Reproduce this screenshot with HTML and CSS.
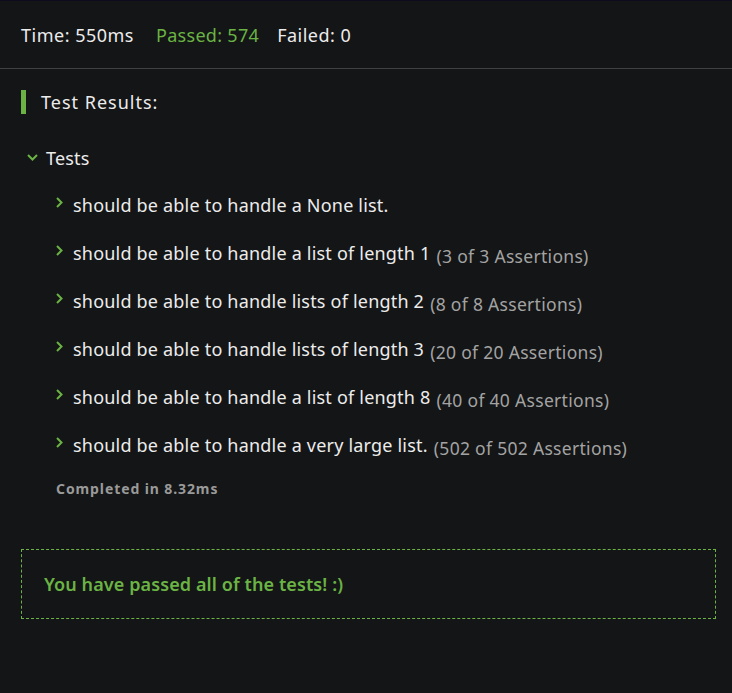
FILE: index.html
```html
<!DOCTYPE html>
<html>
<head>
<meta charset="utf-8">
<link rel="stylesheet" href="styles.css">
</head>
<body>
<div class="panel">
  <div class="stats">
    <span class="stat">Time: 550ms</span>
    <span class="stat pass">Passed: 574</span>
    <span class="stat">Failed: 0</span>
  </div>
  <div class="results">
    <h2 class="title">Test Results:</h2>
    <div class="group">
      <div class="group-head">
        <svg class="chev-down" width="11" height="7" viewBox="0 0 11 7"><path d="M1 1 L5.5 5.5 L10 1" fill="none" stroke="#6ab344" stroke-width="2"/></svg>
        <span>Tests</span>
      </div>
      <ul class="items">
        <li class="item"><svg class="chev" width="7" height="11" viewBox="0 0 7 11"><path d="M1 1 L5.5 5.5 L1 10" fill="none" stroke="#6ab344" stroke-width="2"/></svg><span class="name">should be able to handle a None list.</span></li>
        <li class="item"><svg class="chev" width="7" height="11" viewBox="0 0 7 11"><path d="M1 1 L5.5 5.5 L1 10" fill="none" stroke="#6ab344" stroke-width="2"/></svg><span class="name">should be able to handle a list of length 1</span><span class="count">(3 of 3 Assertions)</span></li>
        <li class="item"><svg class="chev" width="7" height="11" viewBox="0 0 7 11"><path d="M1 1 L5.5 5.5 L1 10" fill="none" stroke="#6ab344" stroke-width="2"/></svg><span class="name">should be able to handle lists of length 2</span><span class="count">(8 of 8 Assertions)</span></li>
        <li class="item"><svg class="chev" width="7" height="11" viewBox="0 0 7 11"><path d="M1 1 L5.5 5.5 L1 10" fill="none" stroke="#6ab344" stroke-width="2"/></svg><span class="name">should be able to handle lists of length 3</span><span class="count">(20 of 20 Assertions)</span></li>
        <li class="item"><svg class="chev" width="7" height="11" viewBox="0 0 7 11"><path d="M1 1 L5.5 5.5 L1 10" fill="none" stroke="#6ab344" stroke-width="2"/></svg><span class="name">should be able to handle a list of length 8</span><span class="count">(40 of 40 Assertions)</span></li>
        <li class="item"><svg class="chev" width="7" height="11" viewBox="0 0 7 11"><path d="M1 1 L5.5 5.5 L1 10" fill="none" stroke="#6ab344" stroke-width="2"/></svg><span class="name">should be able to handle a very large list.</span><span class="count">(502 of 502 Assertions)</span></li>
      </ul>
      <div class="completed">Completed in 8.32ms</div>
    </div>
    <div class="success">You have passed all of the tests! :)</div>
  </div>
</div>
</body>
</html>
```
FILE: styles.css
```css
html, body {
  margin: 0;
  padding: 0;
  background: #141516;
}
body {
  font-family: "Noto Sans", sans-serif;
  color: #ececec;
  min-height: 693px;
  border-top: 1px solid #0e0b1c;
  box-sizing: border-box;
}
.panel {
  display: flex;
  flex-direction: column;
}
.stats {
  display: flex;
  gap: 18px;
  height: 67px;
  align-items: center;
  padding: 0 21px;
  border-bottom: 1px solid #3f4040;
  font-size: 18px;
  letter-spacing: 0.5px;
}
.stat.pass {
  color: #6ab344;
  margin-left: 4px;
  letter-spacing: 0.3px;
}
.results {
  padding: 21px 16px 0 21px;
}
.title {
  margin: 0;
  border-left: 5px solid #6ab344;
  padding-left: 15px;
  font-size: 18px;
  font-weight: 400;
  line-height: 24px;
  letter-spacing: 1px;
}
.group {
  padding-left: 6px;
  margin-top: 32px;
}
.group-head {
  display: flex;
  align-items: center;
  gap: 8px;
  font-size: 18px;
  line-height: 24px;
  letter-spacing: 0.2px;
}
.chev-down {
  position: relative;
  top: -1px;
}
.items {
  list-style: none;
  margin: 0;
  padding: 0 0 0 29px;
  display: flex;
  flex-direction: column;
  gap: 24px;
  margin-top: 23px;
}
.item {
  display: flex;
  align-items: baseline;
  line-height: 24px;
  font-size: 18px;
  letter-spacing: 0.2px;
}
.chev {
  align-self: center;
  margin-right: 10px;
  position: relative;
  top: -3px;
}
.count {
  color: #a3a3a3;
  margin-left: 6px;
  position: relative;
  top: 3px;
  font-size: 17.5px;
  letter-spacing: 0.3px;
}
.completed {
  margin: 22px 0 0 29px;
  font-size: 14px;
  font-weight: 700;
  color: #9a9a9a;
  letter-spacing: 0.9px;
}
.success {
  margin-top: 51px;
  border: 1px dashed #6ab344;
  height: 68px;
  display: flex;
  align-items: center;
  padding-left: 22px;
  color: #6ab344;
  font-weight: 600;
  font-size: 18px;
  letter-spacing: 0.1px;
}
```
